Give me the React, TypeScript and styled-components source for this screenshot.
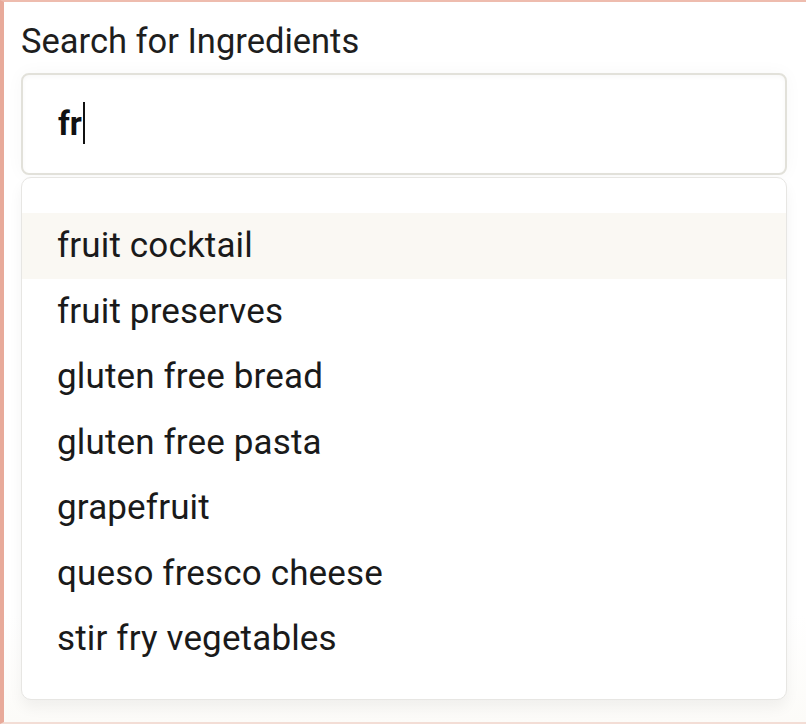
import React from "react"
import styled, { createGlobalStyle } from "styled-components"

const GlobalStyle = createGlobalStyle`
  html, body {
    margin: 0;
    padding: 0;
    background: #ffffff;
  }
  body {
    font-family: Roboto, "Liberation Sans", Arial, sans-serif;
    color: #1c1c1c;
  }
`

const Page = styled.div`
  box-sizing: border-box;
  width: 806px;
  height: 724px;
  border-left: 4px solid #e8aa9a;
  border-top: 2px solid #eebcae;
  border-bottom: 2px solid #f3ddd5;
  background: linear-gradient(#ffffff 85%, #fcfbf8);
  padding: 19px 19px 0 17px;
  display: flex;
  flex-direction: column;
`

const Label = styled.label`
  display: block;
  font-size: 34.5px;
  line-height: 40px;
  color: #1e1e1e;
  margin-bottom: 12px;
`

const SearchBox = styled.div`
  box-sizing: border-box;
  height: 102px;
  border: 2px solid #e2e1da;
  border-radius: 8px;
  background: #ffffff;
  box-shadow: 0 0 18px rgba(0, 0, 0, 0.035), inset 0 2px 4px rgba(0, 0, 0, 0.03);
  display: flex;
  align-items: center;
  padding-left: 35px;
`

const Typed = styled.span`
  font-size: 33px;
  line-height: 40px;
  font-weight: 700;
  color: #111;
`

const Caret = styled.span`
  display: inline-block;
  width: 2px;
  height: 42px;
  background: #111;
  margin-left: 1px;
  transform: translateY(-1px);
`

const Dropdown = styled.ul`
  list-style: none;
  margin: 2px 0 0;
  padding: 35px 0 27px;
  box-sizing: border-box;
  border: 1px solid #e7e6e3;
  border-radius: 10px;
  background: #ffffff;
  box-shadow: 0 8px 14px rgba(0, 0, 0, 0.05);
`

const Option = styled.li<{ active?: boolean }>`
  height: 65.5px;
  line-height: 66px;
  padding-left: 35px;
  font-size: 35px;
  letter-spacing: 0.15px;
  color: #1a1a1a;
  background: ${props => (props.active ? "#faf8f3" : "transparent")};
`

const suggestions = [
  "fruit cocktail",
  "fruit preserves",
  "gluten free bread",
  "gluten free pasta",
  "grapefruit",
  "queso fresco cheese",
  "stir fry vegetables",
]

const App = () => {
  return (
    <>
      <GlobalStyle />
      <Page>
        <Label>Search for Ingredients</Label>
        <SearchBox>
          <Typed>fr</Typed>
          <Caret />
        </SearchBox>
        <Dropdown>
          {suggestions.map((item, i) => (
            <Option key={item} active={i === 0}>
              {item}
            </Option>
          ))}
        </Dropdown>
      </Page>
    </>
  )
}

export default App
